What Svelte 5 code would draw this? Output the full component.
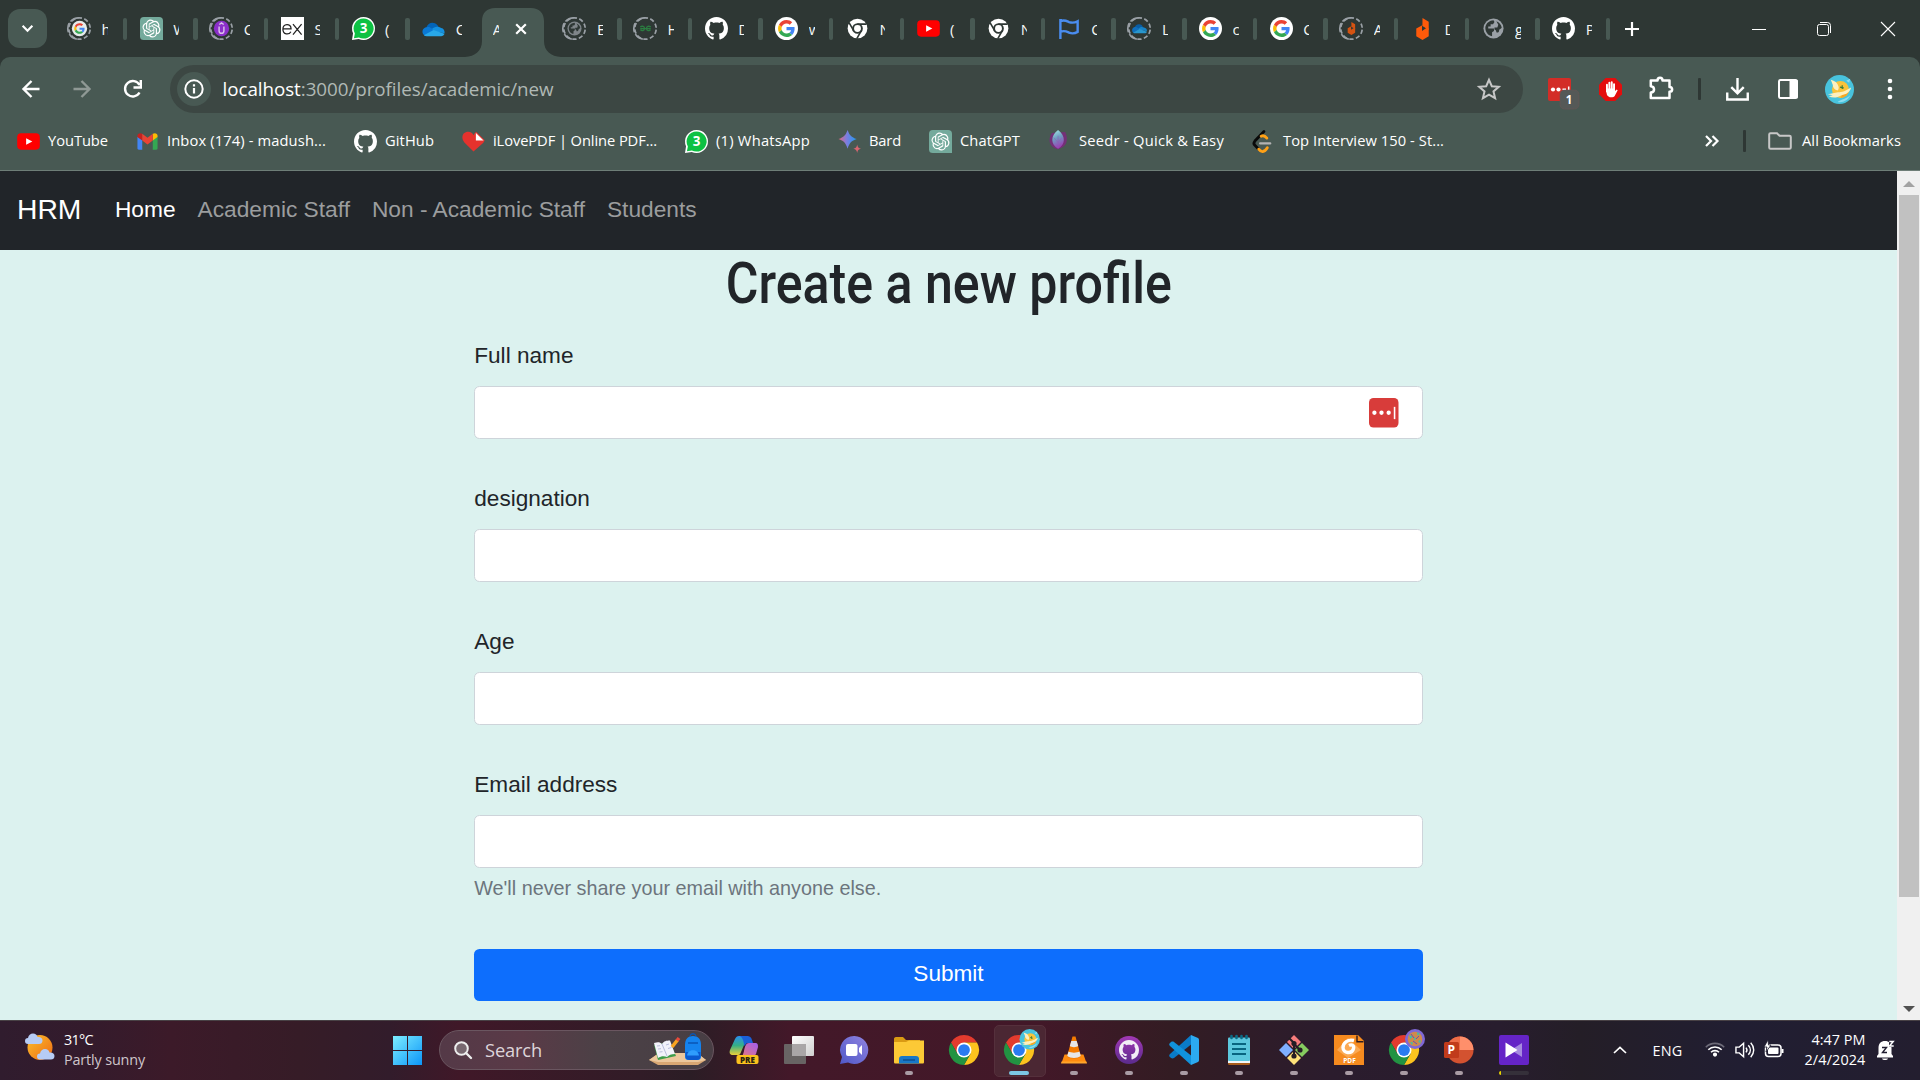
<script>
  // Spreads or tightens the letters of a label so it fills its given width.
  function fit(node, width) {
    const range = document.createRange();
    range.selectNodeContents(node);
    const natural = range.getBoundingClientRect().width;
    const count = node.textContent.trim().length;
    node.style.letterSpacing = (width - natural) / count + 'px';
  }

  // Condenses a heading horizontally to its given width.
  function condense(node, width) {
    node.style.transform = `scaleX(${width / node.getBoundingClientRect().width})`;
  }

  const tabsBefore = [
    ['loadG', 'h'], ['gpt', 'W'], ['loadU', 'C'], ['ex', 'S'], ['whatsapp', '('], ['cloud', 'C']
  ];
  const tabsAfter = [
    ['loadGlobe', 'E'], ['loadGeeks', 'H'], ['github', 'D'], ['google', 'w'], ['chromeMono', 'N'],
    ['youtube', '('], ['chromeMono', 'N'], ['flag', 'C'], ['loadCloud', 'L'], ['google', 'c'],
    ['google', 'C'], ['loadFlame', 'A'], ['flame', 'D'], ['globe', 'g'], ['github', 'P']
  ];
  const bookmarks = [
    { icon: 'youtube', label: 'YouTube', width: 60 },
    { icon: 'gmail', label: 'Inbox (174) - madush...', width: 159 },
    { icon: 'github', label: 'GitHub', width: 49 },
    { icon: 'lovepdf', label: 'iLovePDF | Online PDF...', width: 164 },
    { icon: 'whatsapp', label: '(1) WhatsApp', width: 94 },
    { icon: 'bard', label: 'Bard', width: 32 },
    { icon: 'gpt', label: 'ChatGPT', width: 60 },
    { icon: 'seedr', label: 'Seedr - Quick & Easy', width: 145 },
    { icon: 'leet', label: 'Top Interview 150 - St...', width: 161 }
  ];
  const links = ['Home', 'Academic Staff', 'Non - Academic Staff', 'Students'];
  const fields = ['Full name', 'designation', 'Age', 'Email address'];
  const apps = [
    ['copilot', ''], ['taskview', ''], ['chat', ''], ['folder', 'run'], ['chrome', ''],
    ['chromeBird', 'active'], ['vlc', 'run'], ['ghdesk', 'run'], ['vscode', 'run'], ['notepad', 'run'],
    ['git', 'run'], ['foxit', 'run'], ['chromeArt', 'run'], ['ppt', 'run'], ['player', 'progress']
  ];
</script>

{#snippet gMark()}
  <path fill="#ea4335" d="M24 9.5c3.54 0 6.71 1.22 9.21 3.6l6.85-6.85C35.9 2.38 30.47 0 24 0 14.62 0 6.51 5.38 2.56 13.22l7.98 6.19C12.43 13.72 17.74 9.5 24 9.5z" />
  <path fill="#4285f4" d="M46.98 24.55c0-1.57-.15-3.09-.38-4.55H24v9.02h12.94c-.58 2.96-2.26 5.48-4.78 7.18l7.73 6c4.51-4.18 7.09-10.36 7.09-17.65z" />
  <path fill="#fbbc05" d="M10.53 28.59c-.48-1.45-.76-2.99-.76-4.59s.27-3.14.76-4.59l-7.98-6.19C.92 16.46 0 20.12 0 24c0 3.88.92 7.54 2.56 10.78l7.97-6.19z" />
  <path fill="#34a853" d="M24 48c6.48 0 11.93-2.13 15.89-5.81l-7.73-6c-2.15 1.45-4.92 2.3-8.16 2.3-6.26 0-11.57-4.22-13.47-9.91l-7.98 6.19C6.51 42.62 14.62 48 24 48z" />
{/snippet}

{#snippet octocat()}
  <path d="M8 0C3.58 0 0 3.58 0 8c0 3.54 2.29 6.53 5.47 7.59.4.07.55-.17.55-.38 0-.19-.01-.82-.01-1.49-2.01.37-2.53-.49-2.69-.94-.09-.23-.48-.94-.82-1.13-.28-.15-.68-.52-.01-.53.63-.01 1.08.58 1.23.82.72 1.21 1.87.87 2.33.66.07-.52.28-.87.51-1.07-1.78-.2-3.64-.89-3.64-3.95 0-.87.31-1.59.82-2.15-.08-.2-.36-1.02.08-2.12 0 0 .67-.21 2.2.82.64-.18 1.32-.27 2-.27s1.36.09 2 .27c1.53-1.04 2.2-.82 2.2-.82.44 1.1.16 1.92.08 2.12.51.56.82 1.27.82 2.15 0 3.07-1.87 3.75-3.65 3.95.29.25.54.73.54 1.48 0 1.07-.01 1.93-.01 2.2 0 .21.15.46.55.38A8.01 8.01 0 0 0 16 8c0-4.42-3.58-8-8-8z" />
{/snippet}

{#snippet cloudMark()}
  <path fill="#0364b8" d="M4.500 11C6 6.500 10 5 13.500 6.500c2.500 1 3.500 3 3.800 4.500L11 14z" />
  <path fill="#0a78d4" d="M1 17.500C-1 13 3 9.500 7.500 10.500L14 14 3 19.500C2 19 1.400 18.300 1 17.500z" />
  <path fill="#1490df" d="M10.500 12.500c2-2.500 6-3.500 9.500-1 2.500.3 4 3 3.500 5.500L13 15z" />
  <path fill="#28a8ea" d="M2 19l10-5.500 11.500 4C23 19.300 21.500 20 20 20H5c-1.200 0-2.200-.3-3-1z" />
{/snippet}

{#snippet flameMark()}
  <path fill="#ff5a0a" d="M12 1l6.500 4v8.500L12 9.500z" />
  <path fill="#ff5a0a" fill-rule="evenodd" d="M12 8.500V1.500l-.2 7L5.500 12v8l6.500 4 6.500-4v-8zM11.500 8.500l4.500 3-4.500 3z" />
{/snippet}

{#snippet globeMark()}
  <circle cx="12" cy="12" r="10.500" fill="#9aa0a6" />
  <path fill="#2e3734" d="M3.500 10.500C4.500 6 8 3.500 12 3.300l1 2-1.500 2.200H9v2.500H6.500v2h6v2.500l-2 1.500v4c-4-.5-7.300-4-7-9.500zM15 4.500c3 1 5 3.500 5.600 6.500-.8 2-2.500 1-2.800 3.500-.3 1.500-1.500 2-2.800 1.500 0-1.500-.5-2.500-2-3v-2h3l1-3z" />
{/snippet}

{#snippet ring()}
  <circle cx="12" cy="12" r="11.200" fill="none" stroke="#9aa0a6" stroke-width="1.800" stroke-dasharray="4.600 2.440" stroke-dashoffset="-1.200" />
  <path d="M11 .8A11.200 11.200 0 0 0 11 23.200" fill="none" stroke="#9aa0a6" stroke-width="1.800" stroke-dasharray="9.500 2.300" />
{/snippet}

{#snippet chromeMark()}
  <path fill="#e33b2e" d="M1.600 6A12 12 0 0 1 22.400 6H12L6.800 15z" />
  <path fill="#fcc31e" d="M22.400 6A12 12 0 0 1 12 24l5.200-9L12 6z" />
  <path fill="#229342" d="M12 24A12 12 0 0 1 1.600 6l5.200 9h10.400z" />
  <circle cx="12" cy="12" r="6" fill="#fff" />
  <circle cx="12" cy="12" r="4.700" fill="#2a7bf0" />
{/snippet}

{#snippet birdMark()}
  <circle cx="15" cy="15" r="15" fill="#48c3dd" />
  <circle cx="16" cy="15" r="8.800" fill="#f8c33b" />
  <path fill="#f5a623" d="M16 23.800a8.800 8.800 0 0 0 8.800-8.800l-6 4z" />
  <path fill="#fdf0c0" d="M6 5c4 1 7 3 8 7 .5 2 0 3-1 4-3-1-5-3-5-6zM3 20l9-2c4 0 7 0 15-5-1 5-5 7-10 8-5 3-9 3-13 1l4-1z" />
  <path fill="#8ddcf0" d="M13 28c4-3 9-3 13-7-2 5-7 8-13 7zM22 6l4-2-1 4z" />
  <path stroke="#347c38" stroke-width="1.200" d="M15.500 12.500l4 1M17.800 10.500v4" />
{/snippet}

{#snippet icon(name)}
  {#if name === 'google'}
    <svg viewBox="0 0 24 24"><circle cx="12" cy="12" r="12" fill="#fff" /><g transform="translate(3.200 3.200) scale(.367)">{@render gMark()}</g></svg>
  {:else if name === 'loadG'}
    <svg viewBox="0 0 24 24">{@render ring()}<circle cx="12" cy="12" r="8" fill="#e6ebea" /><g transform="translate(6.500 6.500) scale(.23)">{@render gMark()}</g></svg>
  {:else if name === 'loadU'}
    <svg viewBox="0 0 24 24">{@render ring()}<circle cx="12" cy="12" r="8" fill="#8b2fc9" /><path d="M9.500 10v4.500a2.500 2.500 0 0 0 5 0V10M9.700 7.800L12 6.200l2.300 1.600" fill="none" stroke="#d9c0ea" stroke-width="1.500" /></svg>
  {:else if name === 'loadGlobe'}
    <svg viewBox="0 0 24 24">{@render ring()}<g opacity=".75" transform="translate(3.600 3.600) scale(.7)">{@render globeMark()}</g></svg>
  {:else if name === 'loadGeeks'}
    <svg viewBox="0 0 24 24">{@render ring()}<g fill="none" stroke="#2b7c40" stroke-width="1.400"><path d="M6.500 10.500c2-1.500 4.500-.8 4.500 1.500s-3 3-4.200 1.200M6.500 12.200h11M17.500 10.500c-2-1.500-4.500-.8-4.500 1.500s3 3 4.200 1.200" /></g></svg>
  {:else if name === 'loadCloud'}
    <svg viewBox="0 0 24 24">{@render ring()}<g opacity=".85" transform="translate(4 3.600) scale(.67)">{@render cloudMark()}</g></svg>
  {:else if name === 'loadFlame'}
    <svg viewBox="0 0 24 24">{@render ring()}<g opacity=".8" transform="translate(4.700 4.500) scale(.6)">{@render flameMark()}</g></svg>
  {:else if name === 'gpt'}
    <svg viewBox="0 0 24 24"><path d="M4 0h16a4 4 0 0 1 4 4v20H4a4 4 0 0 1-4-4V4a4 4 0 0 1 4-4z" fill="#74aa9c" /><path fill="#fff" transform="translate(2.600 2.600) scale(.783)" d="M22.2819 9.8211a5.9847 5.9847 0 0 0-.5157-4.9108 6.0462 6.0462 0 0 0-6.5098-2.9A6.0651 6.0651 0 0 0 4.9807 4.1818a5.9847 5.9847 0 0 0-3.9977 2.9 6.0462 6.0462 0 0 0 .7427 7.0966 5.98 5.98 0 0 0 .511 4.9107 6.051 6.051 0 0 0 6.5146 2.9001A5.9847 5.9847 0 0 0 13.2599 24a6.0557 6.0557 0 0 0 5.7718-4.2058 5.9894 5.9894 0 0 0 3.9977-2.9001 6.0557 6.0557 0 0 0-.7475-7.0729zm-9.022 12.6081a4.4755 4.4755 0 0 1-2.8764-1.0408l.1419-.0804 4.7783-2.7582a.7948.7948 0 0 0 .3927-.6813v-6.7369l2.02 1.1686a.071.071 0 0 1 .038.052v5.5826a4.504 4.504 0 0 1-4.4945 4.4944zm-9.6607-4.1254a4.4708 4.4708 0 0 1-.5346-3.0137l.142.0852 4.783 2.7582a.7712.7712 0 0 0 .7806 0l5.8428-3.3685v2.3324a.0804.0804 0 0 1-.0332.0615L9.74 19.9502a4.4992 4.4992 0 0 1-6.1408-1.6464zM2.3408 7.8956a4.485 4.485 0 0 1 2.3655-1.9728V11.6a.7664.7664 0 0 0 .3879.6765l5.8144 3.3543-2.0201 1.1685a.0757.0757 0 0 1-.071 0l-4.8303-2.7865A4.504 4.504 0 0 1 2.3408 7.872zm16.5963 3.8558L13.1038 8.364 15.1192 7.2a.0757.0757 0 0 1 .071 0l4.8303 2.7913a4.4944 4.4944 0 0 1-.6765 8.1042v-5.6772a.79.79 0 0 0-.407-.667zm2.0107-3.0231l-.142-.0852-4.7735-2.7818a.7759.7759 0 0 0-.7854 0L9.409 9.2297V6.8974a.0662.0662 0 0 1 .0284-.0615l4.8303-2.7866a4.4992 4.4992 0 0 1 6.6802 4.66zM8.3065 12.863l-2.02-1.1638a.0804.0804 0 0 1-.038-.0567V6.0742a4.4992 4.4992 0 0 1 7.3757-3.4537l-.142.0805L8.704 5.459a.7948.7948 0 0 0-.3927.6813zm1.0976-2.3654l2.602-1.4998 2.6069 1.4998v2.9994l-2.5974 1.4997-2.6067-1.4997Z" /></svg>
  {:else if name === 'ex'}
    <svg viewBox="0 0 24 24"><rect width="24" height="24" fill="#fff" /><path d="M2 12.300h8.500c0-6-8.500-6-8.500.5 0 6 6.500 6 8.300 2.500M12.500 7.500l9 11M21.500 7.500l-9 11" fill="none" stroke="#222" stroke-width="1.300" /></svg>
  {:else if name === 'whatsapp'}
    <svg viewBox="0 0 24 24"><path d="M12 0a12 12 0 1 1-5 22.900L0 24l1.100-7A12 12 0 0 1 12 0z" fill="#fff" /><path d="M12 1.500a10.500 10.500 0 1 1-4.800 19.800L2 22.200l1-5A10.500 10.500 0 0 1 12 1.500z" fill="#0dc143" /><text x="12" y="17" class="three">3</text></svg>
  {:else if name === 'cloud'}
    <svg viewBox="0 0 24 24">{@render cloudMark()}</svg>
  {:else if name === 'github'}
    <svg viewBox="0 0 16 16" fill="#fff">{@render octocat()}</svg>
  {:else if name === 'chromeMono'}
    <svg viewBox="0 0 24 24"><circle cx="12" cy="12" r="10.300" fill="#fff" /><circle cx="12" cy="12" r="4.600" fill="#fff" stroke="#2e3734" stroke-width="2" /><path d="M12 7.400h9.500M8 14.300L3.300 6.200M16 14.300l-4.700 8.200" stroke="#2e3734" stroke-width="1.700" /></svg>
  {:else if name === 'youtube'}
    <svg viewBox="0 0 24 24"><rect x=".2" y="3.500" width="23.600" height="17" rx="4" fill="#f00" /><path d="M9.500 8.500l6.500 3.500-6.500 3.500z" fill="#fff" /></svg>
  {:else if name === 'flag'}
    <svg viewBox="0 0 24 24"><path d="M2.500 23V2M2.500 4.500c4-2 7 0 9 .8 3 1 6 .7 9-.8v11c-3 1.800-6 2-9 .8-2-1-5-2.800-9-.8" fill="none" stroke="#4a8df0" stroke-width="2.500" /></svg>
  {:else if name === 'flame'}
    <svg viewBox="0 0 24 24">{@render flameMark()}</svg>
  {:else if name === 'globe'}
    <svg viewBox="0 0 24 24">{@render globeMark()}</svg>
  {:else if name === 'gmail'}
    <svg viewBox="0 0 24 24"><path fill="#4285f4" d="M1.500 7v12c0 1 .7 1.500 1.500 1.500h3.500V10.500z" /><path fill="#34a853" d="M22.500 7v12c0 1-.7 1.500-1.500 1.500h-3.500V10.500z" /><path fill="#c5221f" d="M1.500 7.300V6c0-2.500 2.800-3.500 5-2v7z" /><path fill="#fbbc04" d="M22.500 7.300V6c0-2.500-2.800-3.500-5-2v7z" /><path fill="#ea4335" d="M6.500 4l5.500 4.200L17.500 4v7L12 15l-5.500-4z" /></svg>
  {:else if name === 'lovepdf'}
    <svg viewBox="0 0 24 24"><path fill="#e5322d" d="M12 22.500L2.500 13C-1 9 0 3.500 4.500 2.200 8 1.200 11 3 12 5.500 13 3.500 14 2.500 15 2.200l8.500 8.300c0 1-.5 2-1.500 3z" /><path fill="#fff" d="M14.500 3v8h8z" /></svg>
  {:else if name === 'bard'}
    <svg viewBox="0 0 24 24"><defs><linearGradient id="bardFill"><stop stop-color="#e2687a" /><stop offset=".45" stop-color="#7c7de0" /><stop offset="1" stop-color="#1f9af0" /></linearGradient></defs><path fill="url(#bardFill)" d="M10 0c2 5.500 4 7.500 9.500 9.500-5.500 2-7.500 4-9.500 10-2-6-4-8-9.500-10C6 7.500 8 5.500 10 0z" /><path fill="#d96570" d="M20 15c.5 3 1.300 3.800 4 4.500-2.700.7-3.500 1.500-4 4.500-.5-3-1.300-3.800-4-4.500 2.700-.7 3.500-1.500 4-4.500z" /></svg>
  {:else if name === 'seedr'}
    <svg viewBox="0 0 24 24"><defs><linearGradient id="seedFill" x1="0" y1="0" x2=".3" y2="1"><stop stop-color="#a5efe6" /><stop offset=".5" stop-color="#6e9cc0" /><stop offset="1" stop-color="#9b3fb5" /></linearGradient></defs><path fill="#743078" d="M4 3c-5 8-2 15 6 17 9-2 12-9 8-18z" /><path fill="url(#seedFill)" d="M10.500 0c8 6 8 15 0 19.500C2.500 15 2.500 6 10.500 0z" /><path stroke="#8f5cb5" stroke-width=".6" d="M6 8l4.500 5 4-5M10.500 6v13" fill="none" /></svg>
  {:else if name === 'leet'}
    <svg viewBox="0 0 24 24"><path d="M12.500 1.500L3 11.500c-1.500 1.800-1.500 3 0 4.500L6.500 19.500" fill="none" stroke="#090909" stroke-width="2.900" stroke-linecap="round" /><path d="M9.500 6.500c2-1 4-.5 6 2M7 20c2.500 3.500 6 3.500 9-1.500" fill="none" stroke="#ffa116" stroke-width="2.900" stroke-linecap="round" /><path d="M8.500 14h10.500" stroke="#b3b3b3" stroke-width="2.400" stroke-linecap="round" /></svg>
  {:else if name === 'copilot'}
    <svg viewBox="0 0 30 30"><defs><linearGradient id="copA" x1="0" y1="0" x2="0" y2="1"><stop stop-color="#2a8df0" /><stop offset=".5" stop-color="#35b085" /><stop offset="1" stop-color="#ead03a" /></linearGradient><linearGradient id="copB" x1="1" y1="0" x2="0" y2="1"><stop stop-color="#a35cf0" /><stop offset="1" stop-color="#f07f68" /></linearGradient></defs><path fill="url(#copA)" d="M6 4c1-2 2-3 4-3h9L12 17c-1 3-2 3-4 3H4c-3 0-4-2-3-5z" /><path fill="#1a5fd8" d="M11 1h7c3 0 4 1 5 4l1 3h-6l-3 3c0-4-1-8-4-10z" /><path fill="url(#copB)" d="M20 8h6c3 0 3 2 3 4l-2 7-4 5H9c4-1 5-4 6-8 1-5 2-8 5-8z" /><rect x="7.500" y="20" width="22" height="9" rx="2" fill="#fbc21d" /><text x="18.500" y="27.500" class="pre">PRE</text></svg>
  {:else if name === 'taskview'}
    <svg viewBox="0 0 30 30"><defs><linearGradient id="paneFill" x1="0" y1="0" x2="1" y2="1"><stop stop-color="#fff" /><stop offset="1" stop-color="#cfcfcf" /></linearGradient></defs><rect x="8" y="1" width="22" height="20" rx="1" fill="url(#paneFill)" /><rect y="9" width="22" height="20" rx="1" fill="#686464" /><rect x="8" y="9" width="14" height="12" fill="#a9a6a7" /></svg>
  {:else if name === 'chat'}
    <svg viewBox="0 0 30 30"><defs><linearGradient id="chatFill" x1="0" y1="1" x2="1" y2="0"><stop stop-color="#4f58c8" /><stop offset="1" stop-color="#9083e0" /></linearGradient></defs><path fill="url(#chatFill)" d="M15.500 1A14 14 0 1 1 9 27.500L1 29l2-7A14 14 0 0 1 15.500 1z" /><rect x="7" y="9" width="11.500" height="12" rx="2" fill="#fff" /><path fill="#fff" d="M20 13l3-3v10l-3-3z" /></svg>
  {:else if name === 'folder'}
    <svg viewBox="0 0 30 30"><path fill="#d99a13" d="M0 4c0-1 .5-2 2-2h7l3 3h14v6H0z" /><path fill="#fcc936" d="M0 7h12l3-1.500h15V27c0 1-.5 1.500-1.500 1.500h-27C.5 28.500 0 28 0 27z" /><path fill="#1878c8" d="M5 28.500V24c0-2 1-3 3-3h14c2 0 3 1 3 3v4.500z" /><path d="M9 25h12" stroke="#0c4f92" stroke-width="1.500" /></svg>
  {:else if name === 'chrome'}
    <svg viewBox="0 0 24 24">{@render chromeMark()}</svg>
  {:else if name === 'chromeBird'}
    <svg viewBox="0 0 30 30"><g transform="scale(1.250)">{@render chromeMark()}</g><g transform="translate(15.500 -6) scale(.68)">{@render birdMark()}</g></svg>
  {:else if name === 'chromeArt'}
    <svg viewBox="0 0 30 30"><g transform="scale(1.250)">{@render chromeMark()}</g><circle cx="26" cy="4" r="10" fill="#7f68d6" /><circle cx="26" cy="4" r="7.300" fill="#cf8a4c" /><path d="M20 0l3.500 1.500-2 2.500zM28-3l3 2-2.500 1.500zM21 7l3 .5-1 2.500zM29 6l2.500-1v3.500zM25 2l2 2-2 1.500z" fill="#3dc0a8" /><path d="M22-1l3 4M30 1l-3 3M24 6l4 3" stroke="#6a50b4" stroke-width="1" /></svg>
  {:else if name === 'vlc'}
    <svg viewBox="0 0 30 30"><path fill="#ff8b0e" d="M5.500 19.500h19L27.500 28h-25z" /><path fill="#ffa52b" d="M2.500 26.500h25l.5 2H2z" /><path fill="#f47b00" d="M13.500 1.500h3l5.500 20c-3 3-11 3-14 0z" /><path fill="#e6e6e6" d="M12.300 6h5.400l1.500 5c-2 1.500-6.400 1.500-8.400 0zM9.500 16.500c2.500 1.500 8.500 1.500 11 0l1.300 4.500c-3 2.500-10.600 2.500-13.600 0z" /></svg>
  {:else if name === 'ghdesk'}
    <svg viewBox="0 0 30 30"><defs><linearGradient id="deskFill" x1="0" y1="0" x2="0" y2="1"><stop stop-color="#a239b5" /><stop offset="1" stop-color="#5a2b8c" /></linearGradient></defs><circle cx="15" cy="15" r="14" fill="url(#deskFill)" /><g fill="#f2eef6" transform="translate(5 5) scale(1.250)">{@render octocat()}</g></svg>
  {:else if name === 'vscode'}
    <svg viewBox="0 0 30 30"><path fill="#0a7bc8" d="M1 19l21-19 2 8L5 23c-1 .7-2 .5-3 0l-1.500-1.500C0 20.500 0 20 1 19z" /><path fill="#1192dc" d="M1 11l21 19 2-8L5 7C4 6.300 3 6.500 2 7L.5 8.500C0 9.500 0 10 1 11z" /><path fill="#2caaf0" d="M22 0l7 3c.6.3 1 1 1 1.500v21c0 .6-.4 1.200-1 1.500l-7 3z" /></svg>
  {:else if name === 'notepad'}
    <svg viewBox="0 0 30 30"><rect x="4" y="24" width="22" height="6" rx="1.500" fill="#a85c1b" /><rect x="4" y="22" width="22" height="6" fill="#f3f6f7" /><rect x="4" y="2.500" width="22" height="23.500" rx="1" fill="#5cc7dd" /><path d="M8 9h14M8 14h14M8 19h14" stroke="#08647f" stroke-width="2" /><path d="M7.500 1v2M12.500 1v2M17.500 1v2M22.500 1v2" stroke="#0a6c87" stroke-width="2.600" stroke-linecap="round" /></svg>
  {:else if name === 'git'}
    <svg viewBox="0 0 30 30"><path fill="#f77c7c" d="M15 0l7 7-7 7-7-7z" /><path fill="#7fb0ff" d="M7 8l7 7-7 7-7-7z" /><path fill="#86cc5f" d="M23 8l7 7-7 7-7-7z" /><path fill="#ffe27a" d="M15 16l7 7-7 7-7-7z" /><path d="M10 3l5 5v14M15 9l6 6" stroke="#251d24" stroke-width="2" fill="none" /><circle cx="15" cy="8.500" r="2.600" fill="#251d24" /><circle cx="15" cy="21" r="2.600" fill="#251d24" /><circle cx="21" cy="15" r="2.600" fill="#251d24" /></svg>
  {:else if name === 'foxit'}
    <svg viewBox="0 0 30 30"><path fill="#f68b1f" d="M0 0h24l6 6v24H0z" /><path fill="none" stroke="#2e1d22" stroke-width="1.400" d="M23 .5v6.200h6.500" /><path fill="#fba953" d="M14 3l13 12-13 8L3 15z" /><path fill="none" stroke="#fff" stroke-width="3.400" d="M20 5.500c-6-1.500-11 2-11 7 0 6 9 7 10.500 1 .8-3-1.500-4.500-4.500-3" /><text x="15.500" y="27.500" class="pdf">PDF</text></svg>
  {:else if name === 'ppt'}
    <svg viewBox="0 0 30 30"><circle cx="16" cy="15" r="13.500" fill="#d35230" /><path fill="#ed6c47" d="M16 1.500A13.500 13.500 0 0 0 2.500 15H16z" /><path fill="#ff8f6b" d="M16 1.500A13.500 13.500 0 0 1 29.500 15H16z" /><rect y="7" width="15" height="16" rx="1.500" fill="#c13b1b" /><text x="7.300" y="19" class="pp">P</text></svg>
  {:else if name === 'player'}
    <svg viewBox="0 0 30 30"><rect width="30" height="30" rx="2" fill="#6524c7" /><path fill="#a68ae0" d="M23 8v14l-11-7z" /><path fill="#fff" d="M6.500 7.500v15L18.500 15z" /></svg>
  {/if}
{/snippet}

{#snippet tab(name, letter)}
  <div class="tab">
    <span class="fav">{@render icon(name)}</span>
    <span class="letter">{letter}</span>
    <i class="tabsep"></i>
  </div>
{/snippet}

<div class="screen">
  <header class="strip">
    <button class="search-tabs" aria-label="Search tabs"><svg viewBox="0 0 12 12"><path d="M1.500 3.500L6 8l4.500-4.500" fill="none" stroke="#fff" stroke-width="2" /></svg></button>
    <div class="tabs">
      {#each tabsBefore as [name, letter], i}
        <div class="slot" class:first={i === 0} class:last={i === 5}>{@render tab(name, letter)}</div>
      {/each}
      <div class="active-tab">
        <svg class="shape" viewBox="0 0 96 49"><path fill="#485953" d="M0 49c10-.5 17-6 17-16V13C17 5 22 0 30 0h36c8 0 13 5 13 13v20c0 10 7 15.500 17 16z" /></svg>
        <span class="letter">A</span>
        <svg class="x" viewBox="0 0 12 12"><path d="M1.200 1.200l9.600 9.600M10.800 1.200l-9.600 9.600" stroke="#fff" stroke-width="2.200" /></svg>
      </div>
      {#each tabsAfter as [name, letter]}
        <div class="slot">{@render tab(name, letter)}</div>
      {/each}
    </div>
    <svg class="plus" viewBox="0 0 14 14"><path d="M7 0v14M0 7h14" stroke="#fff" stroke-width="2.200" /></svg>
    <div class="window">
      <svg viewBox="0 0 14 14"><path d="M0 7.500h14" stroke="#fff" /></svg>
      <svg viewBox="0 0 14 14" fill="none" stroke="#fff"><rect x=".5" y="2.500" width="11" height="11" rx="2" /><path d="M3 .5h7.500a3 3 0 0 1 3 3V11" /></svg>
      <svg viewBox="0 0 14 14"><path d="M0 0l14 14M14 0L0 14" stroke="#fff" stroke-width="1.100" /></svg>
    </div>
  </header>

  <div class="chrome">
    <div class="toolbar">
      <div class="navs">
        <svg viewBox="0 0 20 20"><path d="M18.500 10H3M10.500 2L2.500 10l8 8" fill="none" stroke="#fff" stroke-width="2.400" /></svg>
        <svg viewBox="0 0 20 20"><path d="M1.500 10H17M9.500 2l8 8-8 8" fill="none" stroke="#8f9995" stroke-width="2.400" /></svg>
        <svg viewBox="0 0 20 20"><path d="M16.500 13.500a7.700 7.700 0 1 1 0-7.500M17.800 1v7.500h-7.300" fill="none" stroke="#fff" stroke-width="2.400" /></svg>
      </div>
      <div class="omnibox">
        <span class="info"><svg viewBox="0 0 20 20"><circle cx="10" cy="10" r="8.700" fill="none" stroke="#fff" stroke-width="2" /><path d="M10 9v5.500M10 5.300v2.200" stroke="#fff" stroke-width="2.200" /></svg></span>
        <span class="url" use:fit={331}><b>localhost</b>:3000/profiles/academic/new</span>
        <svg class="star" viewBox="0 0 24 24"><path d="M12 2.800l2.800 6.400 7 .6-5.300 4.600 1.600 6.800-6.100-3.600-6.100 3.600 1.600-6.800-5.300-4.600 7-.6z" fill="none" stroke="#c7c7c7" stroke-width="2" /></svg>
      </div>
      <div class="exts">
        <svg class="lastpass" viewBox="0 0 31 31"><rect width="23" height="23" rx="2" fill="#d32d27" /><circle cx="5" cy="11.500" r="2.100" fill="#fff" /><circle cx="10.500" cy="11.500" r="2.100" fill="#fff" /><path d="M14.500 11.200h3.500M20.700 8.500v4" stroke="#fff" stroke-width="1.500" /><rect x="12" y="12" width="19" height="19" rx="4.500" fill="#555957" stroke="#6b5554" stroke-width=".6" /><text x="21" y="26" class="badge">1</text></svg>
        <svg class="abp" viewBox="0 0 24 24"><path fill="#e40d0d" d="M7 0h10l7 7v10l-7 7H7l-7-7V7z" /><path fill="none" stroke="#fff" stroke-width="2" stroke-linecap="round" d="M8.300 7v7M10.800 5v9M13.300 4.500v9M15.700 6.500v9" /><path fill="#fff" d="M7.300 11h9.400v2.500l1.800-1.500 1 .8-3 5.700c-1 2-7 3-8.400-1.500z" /></svg>
        <svg class="puzzle" viewBox="0 0 25 24"><path d="M3 4.500h5.500c0-3.700 5-3.700 5 0h7v6.500c3.500.2 3.500 4.600 0 4.800V22H1.800v-5.500c4.300-.5 4.300-5.700 0-6.200V4.500z" fill="none" stroke="#fff" stroke-width="2.500" stroke-linejoin="round" /></svg>
        <i class="vsep"></i>
        <svg class="download" viewBox="0 0 24 24"><path d="M12 0v15M5.500 9.500L12 16l6.500-6.500M1.300 15v7.500h21.400V15" fill="none" stroke="#fff" stroke-width="2.500" /></svg>
        <svg class="panel" viewBox="0 0 20 20"><rect x="1" y="1" width="18" height="18" rx="1.500" fill="none" stroke="#fff" stroke-width="2" /><rect x="11.500" y="1" width="8" height="18" fill="#fff" /></svg>
        <svg class="avatar" viewBox="0 0 30 30">{@render birdMark()}</svg>
        <svg class="dots" viewBox="0 0 6 22" fill="#fff"><circle cx="3" cy="3" r="2.300" /><circle cx="3" cy="11" r="2.300" /><circle cx="3" cy="19" r="2.300" /></svg>
      </div>
    </div>
    <div class="bookmarks">
      {#each bookmarks as b}
        <div class="bookmark"><span class="fav">{@render icon(b.icon)}</span><span class="blabel" use:fit={b.width}>{b.label}</span></div>
      {/each}
      <div class="all">
        <svg class="more" viewBox="0 0 14 12"><path d="M1 1l5 5-5 5M7.500 1l5 5-5 5" fill="none" stroke="#fff" stroke-width="2.200" /></svg>
        <i class="vsep"></i>
        <svg class="dir" viewBox="0 0 24 18"><path d="M1.200 15.500v-13c0-.7.500-1.300 1.300-1.300H9l2.500 2.600h10c.8 0 1.300.5 1.300 1.200v10.500c0 .8-.5 1.300-1.300 1.300h-19c-.8 0-1.300-.5-1.300-1.300z" fill="none" stroke="#c7c7c7" stroke-width="2" /></svg>
        <span class="blabel" use:fit={99}>All Bookmarks</span>
      </div>
    </div>
  </div>

  <div class="viewport">
    <main>
      <nav>
        <a class="brand" href="#top">HRM</a>
        {#each links as link, i}
          <a class="link" class:current={i === 0} href="#top">{link}</a>
        {/each}
      </nav>
      <h1><span use:condense={446}>Create a new profile</span></h1>
      <form>
        {#each fields as field, i}
          <div class="field">
            <label for="field{i}">{field}</label>
            <div class="box">
              <input id="field{i}" />
              {#if i === 0}
                <svg viewBox="0 0 30 30"><rect width="30" height="30" rx="4.500" fill="#d83c3a" /><circle cx="5.500" cy="15" r="2.200" fill="#fff" /><circle cx="12.700" cy="15" r="2.200" fill="#fff" /><circle cx="20" cy="15" r="2.200" fill="#fff" /><path d="M26 9v12.500" stroke="#fff" stroke-width="1.600" /></svg>
              {/if}
            </div>
            {#if i === 3}<small>We'll never share your email with anyone else.</small>{/if}
          </div>
        {/each}
        <button class="submit" type="button">Submit</button>
      </form>
    </main>
    <div class="scrollbar">
      <svg viewBox="0 0 12 6"><path d="M0 6l6-6 6 6z" fill="#a3a3a3" /></svg>
      <div class="thumb"></div>
      <svg viewBox="0 0 12 6"><path d="M0 0l6 6 6-6z" fill="#505050" /></svg>
    </div>
  </div>

  <footer>
    <div class="weather">
      <svg viewBox="0 0 30 30"><defs><linearGradient id="sunFill" x1="0" y1="0" x2="1" y2="1"><stop stop-color="#fbc02c" /><stop offset="1" stop-color="#ef6a13" /></linearGradient></defs><circle cx="15" cy="15.500" r="12.500" fill="url(#sunFill)" /><path fill="#b6ccf5" d="M3 12a3 3 0 0 1 0-6c.5-3 2.500-4.500 5-4.500S12 3 12.500 5c3-.3 5 1 5 3.500S16 12 14 12zM15 27.500a3 3 0 0 1 0-6c.5-3 2.500-4.500 5-4.500s4 1.500 4.500 3.500c3-.3 5 1 5 3.500s-1.500 3.500-3.500 3.500z" /></svg>
      <div class="report"><p use:fit={29}>31°C</p><p class="dim" use:fit={81}>Partly sunny</p></div>
    </div>
    <div class="start"><svg viewBox="0 0 29 29"><defs><linearGradient id="winFill" x1="0" y1="0" x2="1" y2="1"><stop stop-color="#7deeff" /><stop offset="1" stop-color="#0c95f8" /></linearGradient></defs><path fill="url(#winFill)" d="M0 0h14v14H0zM15 0h14v14H15zM0 15h14v14H0zM15 15h14v14H15z" /></svg></div>
    <div class="search">
      <svg class="lens" viewBox="0 0 18 18"><circle cx="7.500" cy="7.500" r="6.300" fill="#786870" stroke="#eee" stroke-width="2" /><path d="M12 12l5 5" stroke="#eee" stroke-width="2.400" stroke-linecap="round" /></svg>
      <span class="hint" use:fit={57}>Search</span>
      <svg class="art" viewBox="0 0 57 32"><path fill="#d9a773" d="M0 26l10-7h38l9 7-8 5H9z" /><path fill="#ecc79c" d="M0 26l10-7h38l9 7-8 2H9z" /><path fill="#3e9d4a" d="M5 11l16-3 6 14-18 4z" /><path fill="#f2f2fa" d="M5 9c4-1.500 6-1 8 1 2-3 4-3.500 8-3.500l5 13.500c-4 0-6 1-8 3-3-1.500-6-1-9 1z" /><path d="M13 10l5 12M8 12l3-.3M9 15l3-.3M10.500 18l3-.3M17 11l3-1M19 14.500l3.500-1" stroke="#b9bddb" /><path stroke="#f7a421" stroke-width="3.500" d="M23 13l5.500-7" /><path stroke="#e84a3c" stroke-width="3.500" d="M28 6.500l2-2.500" /><path fill="#1583ee" d="M36 11c0-6 3-9 8-9s8 3 8 9v11c0 3-1 4-4 4h-8c-3 0-4-1-4-4z" /><path fill="#0b5ad0" d="M36.500 18h15v5c0 2-2 3-4 3h-7c-2 0-4-1-4-3z" /><path d="M41 2c1-3 5-3 6 0M39 9h10" stroke="#0a55b4" fill="none" stroke-width="1.300" /><path fill="#2f9dfd" d="M38 21.500c1-7 11-7 12 0z" /></svg>
    </div>
    <div class="apps">
      {#each apps as [name, state]}
        <div class="app {state}">{@render icon(name)}{#if state}<i></i>{/if}</div>
      {/each}
    </div>
    <div class="tray">
      <svg class="up" viewBox="0 0 14 8"><path d="M1 7l6-5.700L13 7" fill="none" stroke="#fff" stroke-width="1.700" /></svg>
      <span class="lang" use:fit={30}>ENG</span>
      <svg class="wifi" viewBox="0 0 20 16" fill="none" stroke="#fff" stroke-width="1.600"><path stroke="#6d6b78" d="M.8 6.200a13 13 0 0 1 18.400 0" /><path d="M3.300 8.700a9.500 9.500 0 0 1 13.400 0M6 11.300a5.700 5.700 0 0 1 8 0" /><circle cx="10" cy="13.600" r="1.300" fill="#fff" /></svg>
      <svg class="vol" viewBox="0 0 21 18" fill="none" stroke="#fff" stroke-width="1.500"><path d="M1 6h3.500L9 2v14l-4.500-4H1zM11.500 6.500c1.300 1.500 1.300 3.500 0 5M14 4c2.800 3 2.800 7 0 10M16.500 1.500c4.200 4.500 4.200 10.500 0 15" /></svg>
      <svg class="bat" viewBox="0 0 20 17"><rect x="1.500" y="4" width="15.500" height="11.500" rx="3" fill="none" stroke="#fff" stroke-width="1.500" /><rect x="4" y="6.500" width="10.500" height="6.500" rx="1" fill="#fff" /><path d="M18.500 8v4" stroke="#fff" stroke-width="2" /><path d="M4-1L0 6h3l-1 5 5-7H4.500z" fill="#fff" stroke="#211e31" stroke-width=".8" /></svg>
      <div class="clock"><p use:fit={54}>4:47 PM</p><p use:fit={61}>2/4/2024</p></div>
      <svg class="bell" viewBox="0 0 18 20"><path fill="#fff" d="M1.500 14V8c0-4.500 2.500-7 6.500-7s6.500 2.500 6.500 7v6l1.500 2v1.500H0V16zM5 18.500h6c-.5 2-5.500 2-6 0z" /><path d="M12 .5h5.500v6.500h-5.500z" fill="#211e31" /><path d="M12.300 1.500h3.900l-3.700 4.500h4.200" stroke="#fff" stroke-width="1.500" fill="none" /><path d="M5 7.500h4.500L5.500 12.500H10" stroke="#211e31" stroke-width="1.400" fill="none" /></svg>
    </div>
  </footer>
</div>

<style>
  :global(body) { margin: 0; overflow: hidden; }
  * { box-sizing: border-box; }
  svg { display: block; overflow: visible; flex: none; }
  p { margin: 0; }
  .screen { width: 1920px; height: 1080px; display: flex; flex-direction: column; overflow: hidden; font-family: "Open Sans", "Noto Sans", sans-serif; background: #2e3734; }

  .strip { height: 57px; display: flex; align-items: center; background: #2e3734; flex: none; }
  .search-tabs { width: 39px; height: 39px; margin-left: 8px; border: 0; padding: 0; border-radius: 12px; background: #485953; display: grid; place-items: center; }
  .search-tabs svg { width: 13px; height: 13px; }
  .tabs { display: flex; width: 1554px; margin-left: 7px; height: 57px; }
  .slot, .active-tab { width: 70.630px; height: 57px; flex: none; }
  .tab { display: flex; align-items: center; height: 57px; }
  .tab .fav { margin-left: 15px; }
  .first .tab .fav { margin-left: 14px; }
  .fav { width: 23px; height: 23px; flex: none; display: block; }
  .fav svg { width: 23px; height: 23px; }
  .letter { width: 6px; margin-left: 10.500px; overflow: hidden; font-size: 15px; line-height: 24px; color: #f4f6f5; flex: none; }
  .tabsep { position: relative; width: 4.500px; height: 22px; margin-left: auto; margin-right: -2.500px; border-radius: 2px; background: #485953; }
  .last .tabsep { visibility: hidden; }
  .active-tab { position: relative; display: flex; align-items: center; }
  .shape { position: absolute; left: -13px; bottom: 0; width: 96px; height: 49px; }
  .active-tab .letter { position: relative; margin-left: 15px; width: 6px; }
  .x { position: relative; margin-left: 16.500px; width: 12px; height: 12px; }
  .plus { width: 14px; height: 14px; margin-left: 17px; }
  .window { display: flex; gap: 50.500px; margin-left: auto; margin-right: 25px; }
  .window svg { width: 14px; height: 14px; }

  .chrome { height: 114px; flex: none; background: #485953; border-bottom: 1px solid #6e7e77; border-radius: 10px 10px 0 0; }
  .toolbar { height: 64px; display: flex; align-items: center; }
  .navs { display: flex; gap: 31px; margin-left: 21px; width: 149px; }
  .navs svg { width: 20px; height: 20px; }
  .omnibox { width: 1353px; height: 48px; border-radius: 24px; background: #3c4743; display: flex; align-items: center; padding-left: 7px; }
  .info { width: 34px; height: 34px; border-radius: 50%; background: #485953; display: grid; place-items: center; }
  .info svg { width: 20px; height: 20px; }
  .url { margin-left: 11.500px; font-size: 18.800px; line-height: 28px; color: #b0b9b5; white-space: nowrap; }
  .url b { font-weight: 400; color: #fff; }
  .star { width: 24px; height: 24px; margin-left: auto; margin-right: 22px; }
  .exts { display: flex; align-items: center; margin-left: 25px; flex: 1; }
  .lastpass { width: 31px; height: 31px; margin-top: 8px; }
  .abp { width: 23px; height: 23px; margin-left: 20px; }
  .puzzle { width: 25px; height: 24px; margin-left: 27px; margin-top: -3px; }
  .vsep { width: 3px; height: 22px; background: #2e3734; border-radius: 1px; }
  .exts .vsep { margin-left: 24px; }
  .download { width: 23px; height: 23px; margin-left: 25px; }
  .panel { width: 20px; height: 20px; margin-left: 29px; }
  .avatar { width: 29px; height: 29px; margin-left: 27px; }
  .dots { width: 6px; height: 22px; margin-left: 33px; }

  .bookmarks { height: 38px; display: flex; align-items: center; padding-left: 17px; gap: 28px; margin-top: 1px; }
  .bookmark { display: flex; align-items: center; gap: 8px; }
  .blabel { font-size: 14.700px; line-height: 22px; margin-top: -2px; color: #fff; white-space: nowrap; }
  .all { display: flex; align-items: center; margin-left: auto; margin-right: 19px; }
  .more { width: 14px; height: 12px; margin-right: 24px; }
  .dir { width: 24px; height: 18px; margin: 0 10px 0 22px; }

  .viewport { height: 849px; display: flex; flex: none; background: #dcf2ef; }
  main { width: 1897px; height: 849px; overflow: hidden; font-family: "Liberation Sans", Arial, sans-serif; color: #212529; }
  nav { height: 79px; background: #212529; display: flex; align-items: center; padding: 0 0 2px 17px; }
  .brand { font-size: 28.300px; color: #fff; text-decoration: none; margin-right: 22.500px; }
  .link { font-size: 22.720px; color: #9b9d9e; text-decoration: none; padding: 0 11px; }
  .current { color: #fff; }
  h1 { margin: 0; height: 92px; padding-top: 1px; text-align: center; font: 500 57px/66px Roboto, sans-serif; }
  h1 span { display: inline-block; }
  form { width: 948.500px; margin: 0 auto; font-size: 22.600px; }
  .field { margin-bottom: 46px; }
  label { display: block; line-height: 28px; padding-bottom: 5px; margin-bottom: 11px; }
  .box { position: relative; height: 53px; }
  input { display: block; width: 100%; height: 100%; border: 1px solid #ced4da; border-radius: 5.500px; background: #fff; }
  .box svg { position: absolute; right: 24.500px; top: 12px; width: 29.500px; height: 29.500px; }
  small { display: block; margin-top: 6px; font-size: 19.800px; line-height: 29px; color: #6c757d; }
  .submit { display: block; width: 100%; height: 52px; border: 0; border-radius: 5.500px; background: #0d6efd; color: #fff; font: 22.600px "Liberation Sans", Arial, sans-serif; padding: 0 0 3px; }
  .scrollbar { width: 23px; background: #f0f0f0; display: flex; flex-direction: column; align-items: center; padding: 10px 0 8px; }
  .scrollbar svg { width: 12px; height: 6px; }
  .thumb { width: 20px; height: 702px; margin: 8px 0 auto 1px; background: #c1c1c1; }

  footer { height: 60px; flex: none; border-top: 1px solid #484145; display: flex; color: #fff; background: linear-gradient(90deg, #301c2e 0, #341b2c 90px, #3c1a29 170px, #361c27 300px, #321c2b 390px, #401828 460px, #311c27 640px, #2b1d25 690px, #431829 790px, #421828 1040px, #331c23 1170px, #2b1c2d 1330px, #281d2e 1500px, #241e27 1580px, #211e32 1740px, #231e2f 1920px); }
  .weather { display: flex; width: 368px; padding: 11px 0 0 25px; gap: 9px; font-size: 14.400px; line-height: 20px; }
  .weather svg { width: 30px; height: 30px; }
  .report { display: flex; flex-direction: column; height: 40px; margin-top: -2px; }
  .weather p, .clock p { width: max-content; white-space: nowrap; }
  .dim { color: #cfc6cb; }
  .start { width: 71px; padding: 15px 0 0 25px; }
  .start svg { width: 29px; height: 29px; }
  .search { width: 275px; height: 40px; margin-top: 9px; border-radius: 20px; border: 1px solid #6a5660; background: linear-gradient(90deg, #543947, #5a3a47 30%, #4b4146 60%, #483e44); display: flex; align-items: center; font-size: 18.300px; color: #ded5da; }
  .lens { width: 18px; height: 18px; margin-left: 14px; margin-right: 13px; }
  .hint { margin-top: -2px; }
  .art { width: 57px; height: 32px; margin-left: auto; margin-right: 7.500px; }
  .apps { display: flex; margin-left: 2.300px; }
  .app { width: 55px; height: 59px; display: flex; justify-content: center; padding-top: 14px; position: relative; }
  .app svg { width: 30px; height: 30px; z-index: 1; }
  .app i { position: absolute; bottom: 5px; left: 23.500px; width: 8px; height: 4px; border-radius: 2px; background: #a99ba4; z-index: 1; }
  .app.active::before { content: ""; position: absolute; left: 2.500px; top: 4px; width: 50px; height: 50px; border-radius: 5px; background: #4b2733; border: 1px solid #55303c; }
  .app.active i { left: 17.500px; width: 20px; background: #7cc6e4; }
  .app.progress i { left: 12.500px; width: 30px; background: linear-gradient(90deg, #e8d200 2px, #35303a 2px); }
  .tray { display: flex; margin-left: auto; align-items: center; font-size: 14.400px; padding-right: 25px; height: 58px; }
  .up { width: 14px; height: 8px; margin-right: 26px; }
  .wifi { width: 20px; height: 16px; margin-left: 22px; margin-top: -2px; }
  .vol { width: 20px; height: 18px; margin-left: 10px; margin-top: -1px; }
  .bat { width: 20px; height: 17px; margin-left: 9px; margin-top: -2px; }
  .clock { width: 82px; line-height: 20px; display: flex; flex-direction: column; align-items: flex-end; }
  .bell { width: 18px; height: 20px; margin-left: 11.500px; }
  .three { font: 700 14px "Open Sans", sans-serif; fill: #fff; text-anchor: middle; }
  .pre { font: 800 8px "Open Sans", sans-serif; fill: #2c2410; text-anchor: middle; }
  .pdf { font: 700 6.500px "Open Sans", sans-serif; fill: #fff; text-anchor: middle; }
  .pp { font: 700 12px "Open Sans", sans-serif; fill: #fff; text-anchor: middle; }
  .badge { font: 700 11.500px "Open Sans", sans-serif; fill: #fff; text-anchor: middle; }
</style>
